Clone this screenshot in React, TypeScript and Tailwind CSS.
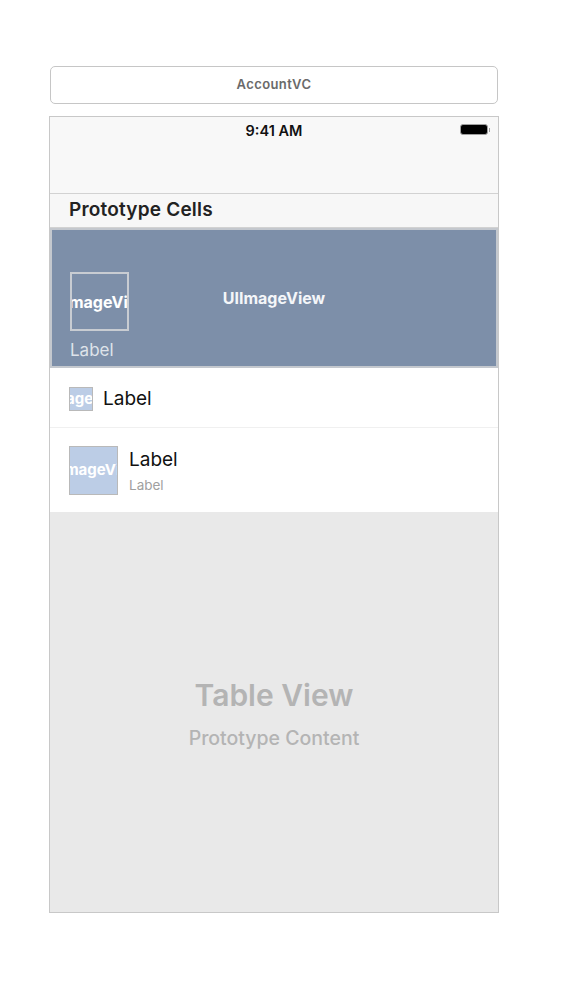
function ImageStub({ size, text }: { size: string; text: string }) {
  return (
    <div className={`${size} flex shrink-0 items-center justify-center overflow-hidden border border-[#b9b9b9] bg-[#bccde6]`}>
      <span className="whitespace-nowrap text-[15px] font-bold text-white">{text}</span>
    </div>
  )
}

function Battery() {
  return (
    <div className="flex items-center">
      <div className="h-[11px] w-[28px] rounded-[3px] border-[1.5px] border-[#a0a0a0] bg-black" />
      <div className="ml-[1px] h-[4px] w-[1.5px] bg-[#a0a0a0]" />
    </div>
  )
}

export default function App() {
  return (
    <div className="h-[990px] w-[566px] bg-white font-['Inter','Liberation_Sans',sans-serif]">
      <div className="ml-[49px] w-[450px] pt-[66px]">
        <div className="mx-[1px] flex h-[38px] items-center justify-center rounded-[5px] border border-[#c6c6c6]">
          <span className="text-[13px] font-semibold tracking-[0.4px] text-[#6a6a6a]">AccountVC</span>
        </div>

        <div className="mt-[12px] flex h-[797px] flex-col border border-[#c8c8c8]">
          {/* navigation bar */}
          <div className="relative h-[77px] border-b border-[#d2d2d2] bg-[#f8f8f8]">
            <div className="pt-[3px] text-center text-[14.5px] font-semibold text-[#111]">9:41 AM</div>
            <div className="absolute right-[8px] top-[7px]">
              <Battery />
            </div>
          </div>

          {/* section header */}
          <div className="flex h-[34px] items-center border-b border-[#d2d2d2] bg-[#f7f7f7] pl-[19px]">
            <span className="text-[19px] font-semibold tracking-[0.2px] text-[#222]">Prototype Cells</span>
          </div>

          {/* custom cell */}
          <div className="relative flex h-[140px] items-center justify-center border-2 border-[#c4c8ce] bg-[#7d8fa9]">
            <span className="text-[16px] font-bold text-[#f4f6f9]">UIImageView</span>
            <div className="absolute left-[18px] top-[42px] flex h-[59px] w-[59px] items-center justify-center overflow-hidden border-2 border-[#c8ccd2]">
              <span className="whitespace-nowrap text-[16px] font-bold text-white">UIImageView</span>
            </div>
            <span className="absolute left-[18px] top-[108px] text-[17px] text-[#dfe3ea]">Label</span>
          </div>

          {/* basic cell */}
          <div className="flex h-[60px] items-center gap-[10px] border-b border-[#f0f0f0] bg-white pl-[19px]">
            <ImageStub size="h-[24px] w-[24px] mt-[3px]" text="UIImageView" />
            <span className="mt-[4px] text-[19px] text-[#111]">Label</span>
          </div>

          {/* subtitle cell */}
          <div className="flex h-[84px] items-center gap-[11px] bg-white pl-[19px]">
            <ImageStub size="h-[49px] w-[49px]" text="UIImageView" />
            <div className="flex flex-col">
              <span className="text-[19px] leading-[24px] text-[#111]">Label</span>
              <span className="mt-[5px] text-[13.5px] leading-[16px] text-[#a0a0a0]">Label</span>
            </div>
          </div>

          {/* empty table area */}
          <div className="flex flex-1 flex-col items-center justify-center bg-[#e9e9e9] pt-[7px]">
            <span className="text-[30px] font-semibold leading-[36px] text-[#b4b4b4]">Table View</span>
            <span className="mt-[11px] text-[19.5px] font-medium text-[#b4b4b4]">Prototype Content</span>
          </div>
        </div>
      </div>
    </div>
  )
}
